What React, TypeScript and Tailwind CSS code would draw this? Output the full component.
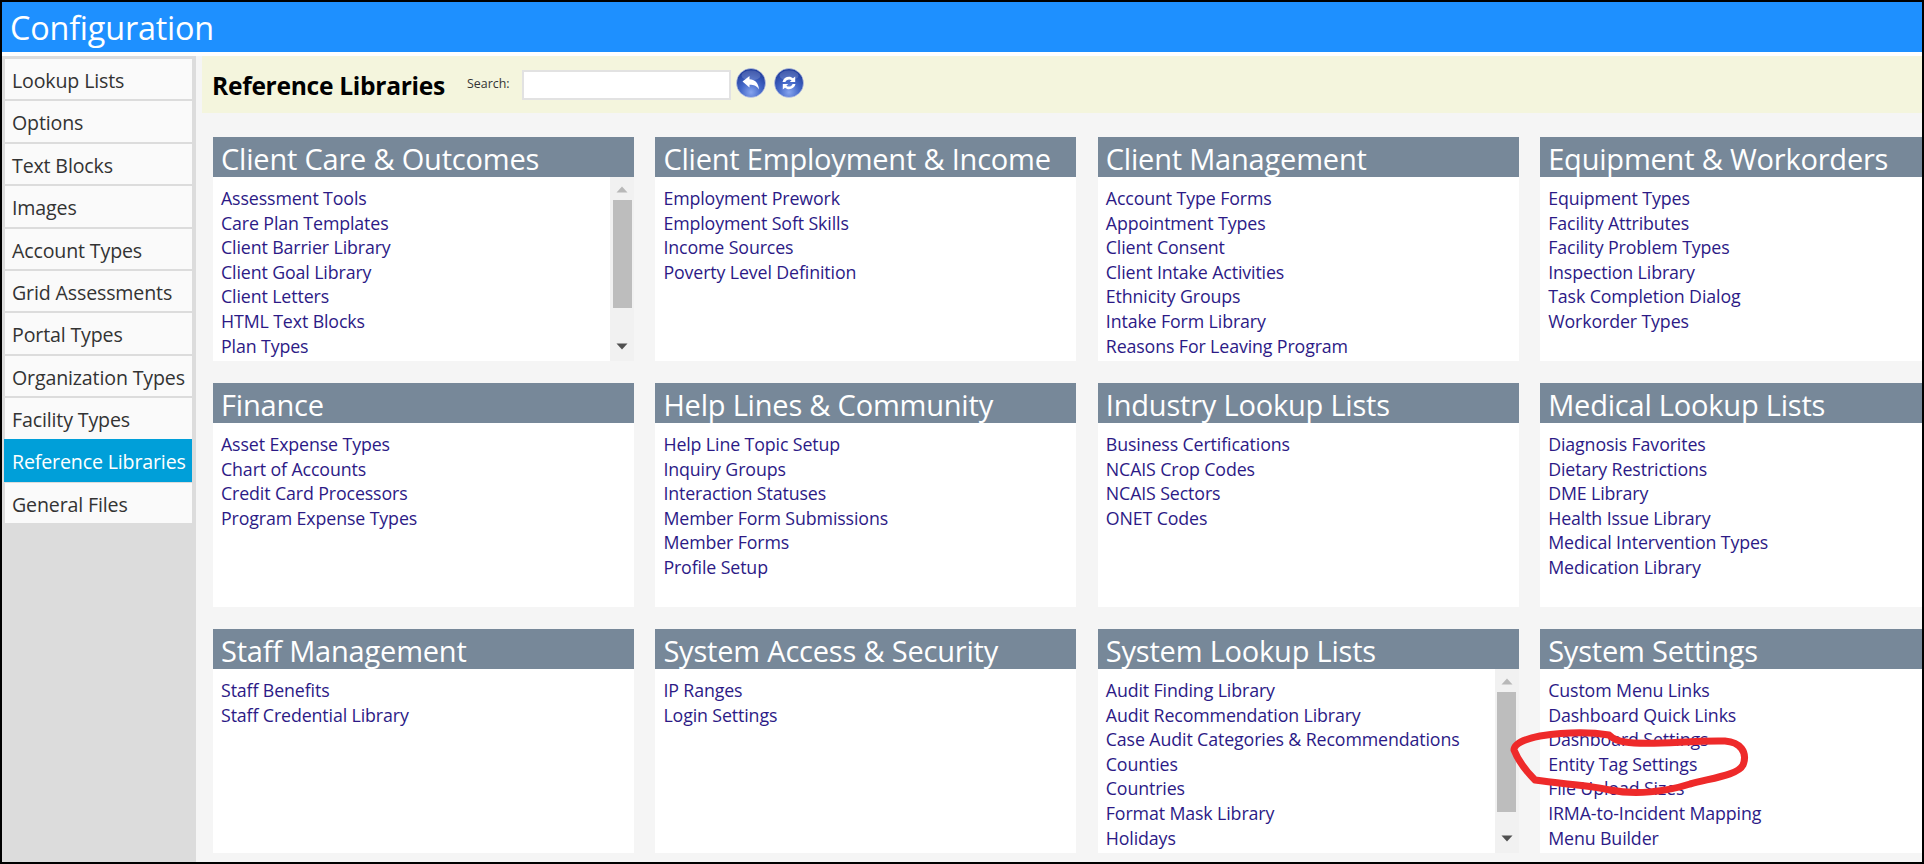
const FONT = "font-['Open_Sans','Noto_Sans',sans-serif]";

const sideItems = ["Lookup Lists","Options","Text Blocks","Images","Account Types","Grid Assessments","Portal Types","Organization Types","Facility Types","Reference Libraries","General Files"];

type Card = { title: string; links: string[]; thumb?: { top: number; height: number } };
const cards: Card[] = [
  { title: "Client Care & Outcomes", links: ["Assessment Tools","Care Plan Templates","Client Barrier Library","Client Goal Library","Client Letters","HTML Text Blocks","Plan Types"], thumb: { top: 23, height: 108 } },
  { title: "Client Employment & Income", links: ["Employment Prework","Employment Soft Skills","Income Sources","Poverty Level Definition"] },
  { title: "Client Management", links: ["Account Type Forms","Appointment Types","Client Consent","Client Intake Activities","Ethnicity Groups","Intake Form Library","Reasons For Leaving Program"] },
  { title: "Equipment & Workorders", links: ["Equipment Types","Facility Attributes","Facility Problem Types","Inspection Library","Task Completion Dialog","Workorder Types"] },
  { title: "Finance", links: ["Asset Expense Types","Chart of Accounts","Credit Card Processors","Program Expense Types"] },
  { title: "Help Lines & Community", links: ["Help Line Topic Setup","Inquiry Groups","Interaction Statuses","Member Form Submissions","Member Forms","Profile Setup"] },
  { title: "Industry Lookup Lists", links: ["Business Certifications","NCAIS Crop Codes","NCAIS Sectors","ONET Codes"] },
  { title: "Medical Lookup Lists", links: ["Diagnosis Favorites","Dietary Restrictions","DME Library","Health Issue Library","Medical Intervention Types","Medication Library"] },
  { title: "Staff Management", links: ["Staff Benefits","Staff Credential Library"] },
  { title: "System Access & Security", links: ["IP Ranges","Login Settings"] },
  { title: "System Lookup Lists", links: ["Audit Finding Library","Audit Recommendation Library","Case Audit Categories & Recommendations","Counties","Countries","Format Mask Library","Holidays"], thumb: { top: 23, height: 120 } },
  { title: "System Settings", links: ["Custom Menu Links","Dashboard Quick Links","Dashboard Settings","Entity Tag Settings","File Upload Sizes","IRMA-to-Incident Mapping","Menu Builder"] },
];

function Scrollbar({ top, height }: { top: number; height: number }) {
  return (
    <div className="w-[24px] shrink-0 bg-[#f1f1f1] relative flex flex-col items-center">
      <svg width="12" height="7" viewBox="0 0 12 7" className="mt-[9px] shrink-0"><path d="M6 0.5 L11.5 6.5 L0.5 6.5 Z" fill="#b8b8b8" /></svg>
      <div className="w-[19px] bg-[#bdbdbd] shrink-0" style={{ marginTop: top - 16, height }} />
      <div className="flex-1" />
      <svg width="12" height="7" viewBox="0 0 12 7" className="mb-[11px] shrink-0"><path d="M6 6.5 L11.5 0.5 L0.5 0.5 Z" fill="#505050" /></svg>
    </div>
  );
}

function LibraryCard({ card }: { card: Card }) {
  return (
    <div className="flex flex-col h-[224px] min-w-0">
      <div className="h-[40px] shrink-0 bg-[#778899] text-white text-[29px] leading-[43px] pl-[8px] whitespace-nowrap tracking-[-0.2px] overflow-hidden">{card.title}</div>
      <div className="flex-1 flex min-h-0 bg-white">
        <div className="flex-1 min-w-0 overflow-hidden pl-[8px] pt-[9px]">
          {card.links.map((l) => (
            <div key={l} className="h-[24.6px] leading-[24.6px] text-[17.8px] text-[#2c1a86] whitespace-nowrap tracking-[-0.12px]">{l}</div>
          ))}
        </div>
        {card.thumb && <Scrollbar top={card.thumb.top} height={card.thumb.height} />}
      </div>
    </div>
  );
}

function RoundIcon({ kind }: { kind: "back" | "refresh" }) {
  const id = `g-${kind}`;
  return (
    <svg width="30" height="30" viewBox="0 0 30 30" className="shrink-0">
      <defs>
        <radialGradient id={id} cx="50%" cy="82%" r="72%">
          <stop offset="0%" stopColor="#86a4ee" />
          <stop offset="50%" stopColor="#4468c8" />
          <stop offset="100%" stopColor="#23409f" />
        </radialGradient>
      </defs>
      <circle cx="15" cy="15" r="14.5" fill={`url(#${id})`} stroke="#c9cfe8" strokeWidth="0.6" />
      <ellipse cx="15" cy="7.5" rx="9.5" ry="5" fill="#ffffff" opacity="0.16" />
      {kind === "back" ? (
        <path d="M6.5 13.5 L13.5 8 L13.5 11.2 C18.5 11.2 22.5 14.5 23 21.5 C21 18 18 16.8 13.5 16.8 L13.5 19.5 Z" fill="#fff" />
      ) : (
        <g fill="#fff">
          <path d="M8.5 14 C9.2 10.6 12 8.8 15 8.8 C16.6 8.8 18 9.4 19 10.3 L21.2 8.6 L21.2 14 L15.8 14 L17.6 12.3 C16.9 11.7 16 11.4 15.2 11.4 C13.4 11.4 12 12.4 11.4 14 Z" />
          <path d="M21.5 16 C20.8 19.4 18 21.2 15 21.2 C13.4 21.2 12 20.6 11 19.7 L8.8 21.4 L8.8 16 L14.2 16 L12.4 17.7 C13.1 18.3 14 18.6 14.8 18.6 C16.6 18.6 18 17.6 18.6 16 Z" />
        </g>
      )}
    </svg>
  );
}

export default function App() {
  return (
    <div className={`${FONT} relative w-[1924px] h-[864px] bg-black p-[2px] overflow-hidden flex flex-col`}>
      <div className="h-[50px] shrink-0 bg-[#1e90ff] text-white text-[32.4px] leading-[50px] pl-[8px] tracking-[-0.2px]">Configuration</div>
      <div className="h-[4px] shrink-0 bg-white" />
      <div className="flex-1 flex min-h-0">
        <div className="w-[194px] shrink-0 bg-[#dcdcdc] pt-[3px] pl-[3px] pr-[4px] flex flex-col gap-[2px]">
          {sideItems.map((s) => {
            const active = s === "Reference Libraries";
            return (
              <div
                key={s}
                className={
                  active
                    ? "h-[43px] -my-[1.5px] -ml-px bg-[#009fd9] text-white text-[19.6px] leading-[46px] pl-[8px] whitespace-nowrap tracking-[-0.15px]"
                    : "h-[40.4px] bg-[#fafafa] text-[#333333] text-[19.6px] leading-[44px] pl-[7px] whitespace-nowrap tracking-[-0.15px]"
                }
              >
                {s}
              </div>
            );
          })}
        </div>
        <div className="flex-1 min-w-0 bg-[#f5f5f5] pl-[6px] flex flex-col">
          <div className="h-[57px] shrink-0 bg-[#f4f5dd] flex items-center pl-[10px]">
            <div className="text-[24.6px] font-bold text-black tracking-[-0.3px] w-[255px] shrink-0 whitespace-nowrap pt-[4px]">Reference Libraries</div>
            <div className="text-[12.4px] text-[#333333] w-[56px] shrink-0 whitespace-nowrap">Search:</div>
            <div className="w-[209px] h-[30px] -ml-px bg-white border-2 border-[#e2e2e2] shrink-0" />
            <div className="flex gap-[8px] ml-[5px] -mt-[4px]">
              <RoundIcon kind="back" />
              <RoundIcon kind="refresh" />
            </div>
          </div>
          <div className="flex-1 min-h-0 pl-[11px] pt-[24px] grid grid-cols-[repeat(3,421px)_1fr] gap-x-[21.4px] gap-y-[22px] content-start">
            {cards.map((c) => <LibraryCard key={c.title} card={c} />)}
          </div>
        </div>
      </div>
      <svg className="absolute left-0 top-0 pointer-events-none" width="1924" height="864" viewBox="0 0 1924 864" fill="none">
        <path d="M1609 735 C1585 731 1560 733 1540 736 C1524 739 1514 744 1514 750 C1518 760 1527 772 1535 780 C1560 784 1590 785 1610 790 C1635 795 1665 792 1690 784 C1712 778 1738 775 1743 765 C1748 752 1740 742 1725 741 C1690 740 1650 746 1625 742 C1618 741 1612 738 1609 735 Z" stroke="#ee2a2a" strokeWidth="7" strokeLinejoin="round" />
      </svg>
    </div>
  );
}
